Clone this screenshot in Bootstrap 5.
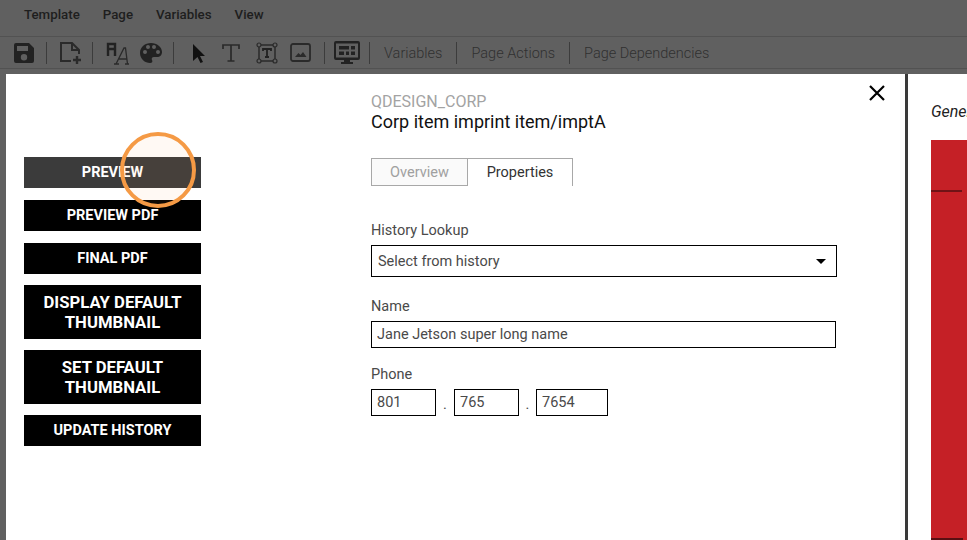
<!DOCTYPE html>
<html lang="en">
<head>
<meta charset="utf-8">
<title>Template editor</title>
<link rel="stylesheet" href="https://cdn.jsdelivr.net/npm/bootstrap@5.3.0/dist/css/bootstrap.min.css">
<style>
html,body{height:100%;overflow:hidden}
body{font-family:Roboto,"Liberation Sans",sans-serif;background:#606060;color:#000;position:relative;width:967px;height:540px}
.menu-row{height:37px;border-bottom:1px solid #525252;padding-left:24px;gap:23px;font-size:13.3px;font-weight:500;color:#1e1e1e;padding-bottom:6px}
.tool-row{height:32px;border-bottom:1px solid #525252;color:#2a2a2a}
.tool-sep{width:1px;height:22px;background:#3c3c3c;flex:none}
.tool-text{font-size:14.5px;font-weight:300;color:#303030;padding:2px 14px 0;white-space:nowrap}
.tool-ico{flex:none;display:block}
.gap-top{height:5px}
.stage{height:466px}
.edge{width:6px}
.sheet{width:899px;background:#fff;position:relative}
.split{width:3px;background:#3a3a3a}
.side{width:59px;background:#fff;padding-left:23px}
.gen-label{font-style:italic;font-size:16px;line-height:19px;padding-top:28px;height:66px;white-space:nowrap;overflow:hidden;color:#222}
.red-block{height:400px;width:36px;background:#c52026;position:relative}
.red-rule{position:absolute;left:0;top:50px;width:31px;height:2px;background:#701316}
.red-foot{position:absolute;left:0;bottom:0;width:32px;height:2px;background:#5a0f12}
.btn-col{width:177px;margin-left:18px;padding-top:83px;gap:11px}
.act-btn{background:#000;color:#fff;font-size:14.5px;font-weight:700;border:0;border-radius:0;padding:1px 6px 0;line-height:20px;min-height:31px;width:100%;text-align:center}
.act-btn.tall{min-height:54px;font-size:16.7px}
.act-btn.on{background:#3b3b3b}
.act-btn.roomy{margin-bottom:1px}
.form-col{margin-left:170px;width:466px;padding-top:19px}
.corp{font-size:16px;line-height:17px;color:#a3a3a3}
.item-title{font-size:18px;line-height:22px;color:#111;margin-top:1px}
.tab-row{margin-top:25px;height:29px;margin-bottom:0}
.tab-a{width:97px;border:1px solid #a8a8a8;background:#fafafa;color:#a0a0a0;font-size:14.5px;text-align:center;line-height:27px;height:28px}
.tab-b{width:105px;border:1px solid #a8a8a8;border-left:0;border-bottom:0;color:#333;font-size:14.5px;text-align:center;line-height:27px;height:28px}
.tab-gap{height:35px}
.fld-label{font-size:14.5px;line-height:18px;color:#4a4a4a;margin:0 0 5px}
.sel-box{height:32px;width:466px;border:1px solid #000;font-size:14.5px;color:#4a4a4a;padding:0 10px 0 6px;line-height:29px;margin-bottom:21px}
.caret-tri{width:0;height:0;border-left:5px solid transparent;border-right:5px solid transparent;border-top:5px solid #000}
.txt-in{height:27px;border:1px solid #000;border-radius:0;padding:0 5px;font-size:14.5px;color:#4a4a4a;font-family:inherit;display:block;outline:0;background:#fff}
.txt-wide{width:465px;margin-bottom:18px}
.txt-ph{width:65px}
.txt-ph.last{width:72px}
.dot-sep{width:18px;text-align:center;font-size:14.5px;color:#4a4a4a;line-height:31px;height:27px}
.dot-sep.tight{width:17px}
.close-x{position:absolute;left:862px;top:10px;width:18px;height:18px;background:none;border:0;padding:0;line-height:0}
.ring{position:absolute;left:120px;top:132px;width:76px;height:76px;border-radius:50%;border:4px solid #f59a45;background:rgba(255,150,60,.06);pointer-events:none}
</style>
</head>
<body>
<header>
  <nav class="menu-row d-flex align-items-center">
    <span>Template</span><span>Page</span><span>Variables</span><span>View</span>
  </nav>
  <div class="tool-row d-flex align-items-center">
    <svg class="tool-ico" width="22" height="22" viewBox="0 0 22 22" style="margin-left:13px"><path fill="#222" d="M3 1h13l5 5v13a2 2 0 0 1-2 2H3a2 2 0 0 1-2-2V3a2 2 0 0 1 2-2zm1 3v5h11V4zm7 8a3.2 3.2 0 1 0 0 6.4 3.2 3.2 0 0 0 0-6.4z" fill-rule="evenodd"/></svg>
    <span class="tool-sep" style="margin-left:11px"></span>
    <svg class="tool-ico" width="24" height="24" viewBox="0 0 24 24" style="margin-left:12px"><path fill="none" stroke="#2a2a2a" stroke-width="2" d="M12 20H2V2h11l7 7v4M13 2v7h7"/><path stroke="#2a2a2a" stroke-width="2.4" d="M18 15v8M14 19h8"/></svg>
    <span class="tool-sep" style="margin-left:9px"></span>
    <svg class="tool-ico" width="24" height="24" viewBox="0 0 24 24" style="margin-left:13px"><path fill="none" stroke="#222" stroke-width="2.4" d="M2 15V3h7v12M2 8h7"/><path fill="none" stroke="#2a2a2a" stroke-width="1.3" d="M10 23 L18 7h1.5l2 16M13 18h8M8 23h5M19 23h4"/></svg>
    <svg class="tool-ico" width="22" height="22" viewBox="0 0 22 22" style="margin-left:10px"><path fill="#222" fill-rule="evenodd" d="M11 1C5 1 0 5 0 11s5 10 10 10c2.500 0 2.800-1.500 2-3-.8-1.500 0-3 2-3h3c3 0 5-2 5-5C22 5 17 1 11 1zM5 12a2 2 0 1 1 0-4 2 2 0 0 1 0 4zm3-5a2 2 0 1 1 0-4 2 2 0 0 1 0 4zm6 0a2 2 0 1 1 0-4 2 2 0 0 1 0 4zm4 5a2 2 0 1 1 0-4 2 2 0 0 1 0 4z"/></svg>
    <span class="tool-sep" style="margin-left:11px"></span>
    <svg class="tool-ico" width="14" height="20" viewBox="0 0 14 20" style="margin-left:18px"><path fill="#111" d="M1 1l12 12H8l3 6-2.500 1-3-6L1 18z"/></svg>
    <svg class="tool-ico" width="20" height="20" viewBox="0 0 20 20" style="margin-left:15px"><path fill="none" stroke="#2a2a2a" stroke-width="1.7" d="M2 6V2h16v4M10 2v16M6.500 18h7"/></svg>
    <svg class="tool-ico" width="22" height="22" viewBox="0 0 22 22" style="margin-left:15px"><rect x="3" y="3" width="16" height="16" fill="none" stroke="#2a2a2a" stroke-width="1.500"/><g fill="#606060" stroke="#2a2a2a" stroke-width="1.200"><circle cx="3" cy="3" r="2"/><circle cx="19" cy="3" r="2"/><circle cx="3" cy="19" r="2"/><circle cx="19" cy="19" r="2"/></g><path fill="none" stroke="#222" stroke-width="1.800" d="M7 9V7h8v2M11 7v8M9 15h4"/></svg>
    <svg class="tool-ico" width="21" height="21" viewBox="0 0 21 21" style="margin-left:12px"><rect x="1" y="2" width="19" height="17" rx="2" fill="none" stroke="#2a2a2a" stroke-width="1.800"/><path fill="#2a2a2a" d="M5 15l3.500-4 2 2 2.500-3 3.500 5z"/></svg>
    <span class="tool-sep" style="margin-left:13px"></span>
    <svg class="tool-ico" width="26" height="24" viewBox="0 0 26 24" style="margin-left:9px"><path fill="#222" fill-rule="evenodd" d="M2 0h22a2 2 0 0 1 2 2v15a2 2 0 0 1-2 2H2a2 2 0 0 1-2-2V2a2 2 0 0 1 2-2zm0 2.500v14h22v-14z"/><path fill="#222" d="M10 19h6v2h3v2H7v-2h3zM5 5h10v3.500H5zM17 5h4v3.500h-4zM5 10.500h5v3.500H5zM12 10.500h3v3.500h-3zM17 10.500h4v3.500h-4z"/></svg>
    <span class="tool-sep" style="margin-left:9px"></span>
    <span class="tool-text">Variables</span><span class="tool-sep"></span>
    <span class="tool-text">Page Actions</span><span class="tool-sep"></span>
    <span class="tool-text">Page Dependencies</span>
  </div>
  <div class="gap-top"></div>
</header>
<main class="stage d-flex">
  <div class="edge"></div>
  <section class="sheet d-flex">
    <div class="btn-col d-flex flex-column">
      <button type="button" class="act-btn on roomy">PREVIEW</button>
      <button type="button" class="act-btn roomy">PREVIEW PDF</button>
      <button type="button" class="act-btn">FINAL PDF</button>
      <button type="button" class="act-btn tall">DISPLAY DEFAULT THUMBNAIL</button>
      <button type="button" class="act-btn tall">SET DEFAULT THUMBNAIL</button>
      <button type="button" class="act-btn">UPDATE HISTORY</button>
    </div>
    <div class="form-col">
      <div class="corp">QDESIGN_CORP</div>
      <div class="item-title">Corp item imprint item/imptA</div>
      <div class="tab-row d-flex">
        <div class="tab-a">Overview</div>
        <div class="tab-b">Properties</div>
      </div>
      <div class="tab-gap"></div>
      <label class="fld-label d-block">History Lookup</label>
      <div class="sel-box d-flex justify-content-between align-items-center"><span>Select from history</span><span class="caret-tri"></span></div>
      <label class="fld-label d-block" for="nm">Name</label>
      <input id="nm" class="txt-in txt-wide" value="Jane Jetson super long name">
      <label class="fld-label d-block">Phone</label>
      <div class="d-flex">
        <input class="txt-in txt-ph" value="801" aria-label="area"><span class="dot-sep">.</span>
        <input class="txt-in txt-ph" value="765" aria-label="prefix"><span class="dot-sep tight">.</span>
        <input class="txt-in txt-ph last" value="7654" aria-label="line">
      </div>
    </div>
    <button type="button" class="close-x" aria-label="Close"><svg width="18" height="18" viewBox="0 0 18 18"><path stroke="#000" stroke-width="2.200" d="M2 2l14 14M16 2L2 16"/></svg></button>
  </section>
  <div class="split"></div>
  <aside class="side">
    <div class="gen-label">General</div>
    <div class="red-block"><div class="red-rule"></div><div class="red-foot"></div></div>
  </aside>
</main>
<div class="ring"></div>
</body>
</html>
